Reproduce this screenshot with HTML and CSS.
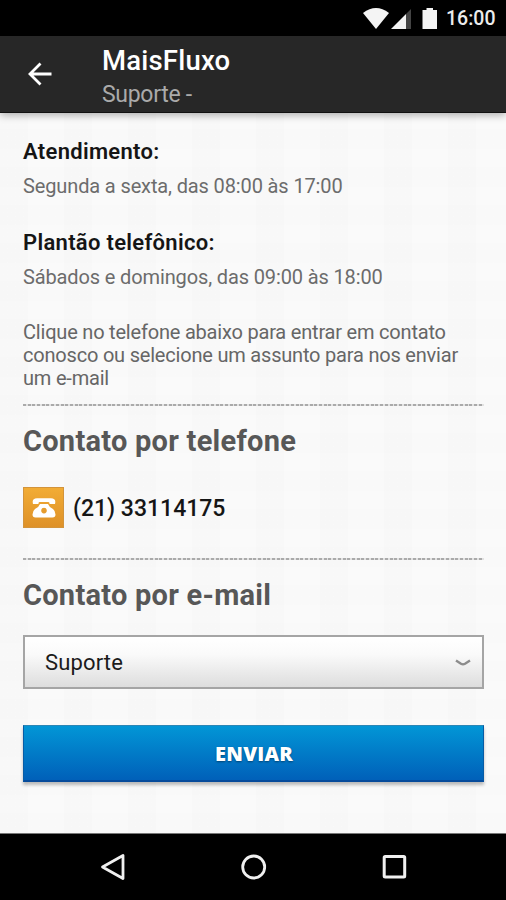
FILE: index.html
```html
<!DOCTYPE html>
<html lang="pt-BR">
<head>
<meta charset="utf-8">
<title>MaisFluxo</title>
<link rel="stylesheet" href="styles.css">
</head>
<body>
<div class="status">
  <svg class="status-icons" width="78" height="24" viewBox="0 0 78 24">
    <path d="M0 6Q13-4 26 6L13 22Z" fill="#f4f4f4"/>
    <path d="M28 22L43 7V22Z" fill="#f4f4f4"/>
    <path d="M43 7L48 2V22H43Z" fill="#444"/>
    <path d="M59.500 3h4V1h6.500v2h4v19H59.500Z" fill="#f4f4f4"/>
  </svg>
  <span class="clock">16:00</span>
</div>
<header class="bar">
  <svg class="back" width="26" height="26" viewBox="0 0 26 26"><path d="M25.500 13H4.500M14.500 2.500L4 13L14.500 23.500" fill="none" stroke="#fff" stroke-width="2.800"/></svg>
  <div>
    <h1 class="title">MaisFluxo</h1>
    <div class="subtitle">Suporte -</div>
  </div>
</header>
<main class="content">
  <section class="hours">
    <h2 class="label">Atendimento:</h2>
    <p class="text">Segunda a sexta, das 08:00 às 17:00</p>
  </section>
  <section class="hours">
    <h2 class="label">Plantão telefônico:</h2>
    <p class="text">Sábados e domingos, das 09:00 às 18:00</p>
  </section>
  <p class="text intro">Clique no telefone abaixo para entrar em contato<br>conosco ou selecione um assunto para nos enviar<br>um e-mail</p>
  <div class="rule"></div>
  <h2 class="heading">Contato por telefone</h2>
  <div class="phone">
    <span class="phone-icon">
      <svg width="24" height="22" viewBox="0 0 24 22">
        <path d="M1 7Q-.5 1.200 5 1.200H19Q24.500 1.200 23 7H17.500Q17.800 5 16 5H8Q6.200 5 6.500 7Z" fill="#fff"/>
        <path fill-rule="evenodd" d="M8 7H16Q17 10 21 12Q23.500 14 23.500 17.500Q23.500 20.500 20.500 20.500H3.500Q.5 20.500 .5 17.500Q.5 14 3 12Q7 10 8 7ZM12 10.800a2.800 2.800 0 1 0 0 5.600a2.800 2.800 0 1 0 0-5.600Z" fill="#fff"/>
      </svg>
    </span>
    <span class="number">(21) 33114175</span>
  </div>
  <div class="rule"></div>
  <h2 class="heading">Contato por e-mail</h2>
  <div class="select"><span>Suporte</span>
    <svg width="16" height="8" viewBox="0 0 16 8"><path d="M1 1.500L6 4.800Q8 6 10 4.800L15 1.500" fill="none" stroke="#8c8c8c" stroke-width="2.400"/></svg>
  </div>
  <button class="send">ENVIAR</button>
</main>
<nav class="nav">
  <svg width="26" height="28" viewBox="0 0 26 28"><path d="M23 2.500V25.500L2.500 14Z" fill="none" stroke="#f0f0f0" stroke-width="2.800" stroke-linejoin="round"/></svg>
  <svg width="26" height="28" viewBox="0 0 26 28"><circle cx="12.700" cy="14" r="11" fill="none" stroke="#f0f0f0" stroke-width="2.800"/></svg>
  <svg width="26" height="28" viewBox="0 0 26 28"><rect x="2.200" y="3.500" width="20.500" height="20.500" rx="1" fill="none" stroke="#f0f0f0" stroke-width="3"/></svg>
</nav>
</body>
</html>
```
FILE: styles.css
```css
* { box-sizing: border-box; margin: 0; padding: 0; }
body {
  width: 506px; height: 900px; overflow: hidden;
  display: flex; flex-direction: column;
  font-family: Roboto, "Liberation Sans", sans-serif;
  white-space: nowrap; background: #f9f9f9;
}
.status {
  height: 36px; flex: none; background: #000; color: #ececec;
  display: flex; align-items: center; justify-content: flex-end; padding-right: 11px;
}
.status-icons { margin: 2px 5px 0 0; }
.clock { font-size: 19.500px; font-weight: 500; line-height: 36px; padding-top: 2px; width: 49px; text-align: right; }
.bar {
  height: 77px; flex: none; background: #272727; color: #fff;
  display: flex; padding: 8px 0 0 26px; gap: 50px;
  border-bottom: 1px solid #111; box-shadow: 0 2px 8px rgba(0,0,0,.32); position: relative;
}
.back { margin-top: 17px; }
.title { font-size: 27.500px; font-weight: 500; line-height: 34px; letter-spacing: .2px; }
.subtitle { font-size: 23px; line-height: 34px; color: #aaa; letter-spacing: -.3px; }
.content {
  flex: 1; padding: 26px 22px 0 23px;
  background:
    repeating-linear-gradient(90deg, rgba(0,0,0,.006) 0 28px, transparent 28px 64px),
    repeating-linear-gradient(0deg, rgba(0,0,0,.004) 0 20px, transparent 20px 38px),
    #fafafa;
}
.hours { height: 91px; }
.label { font-size: 22px; line-height: 26px; font-weight: 600; color: #151515; letter-spacing: .3px; }
.text { font-size: 20px; line-height: 23px; color: #6c6c6c; letter-spacing: -.13px; }
.hours .text { margin-top: 10px; }
.intro { height: 83px; letter-spacing: -.2px; color: #666; }
.rule { height: 2px; background: repeating-linear-gradient(90deg, #aaa 0 3px, #e2e2e2 3px 4.700px); }
.heading { font-size: 29px; line-height: 34px; margin-top: 18px; font-weight: 700; color: #575757; letter-spacing: .26px; }
.phone { display: flex; align-items: center; height: 41px; margin: 29px 0 30px; gap: 9px; }
.phone-icon {
  width: 41px; height: 41px; display: flex; align-items: center; justify-content: center;
  background: linear-gradient(#f2ac35, #de9128); border: 1px solid #d3943b;
}
.number { font-size: 23px; font-weight: 500; color: #151515; padding-top: 2px; }
.select {
  height: 54px; margin-top: 23px; padding: 0 11px 0 20px; border: 2px solid #a5a5a5;
  background: linear-gradient(#fff, #fafafa 35%, #ddd);
  display: flex; align-items: center; justify-content: space-between;
  font-size: 22px; color: #1b1b1b; letter-spacing: .15px;
}
.select svg { margin-top: 2px; }
.send {
  display: block; width: 100%; height: 57px; margin-top: 36px;
  border: 1px solid #075ca6; border-top-color: #2c86b5; border-bottom: 2px solid #064b9b;
  background: linear-gradient(#0296d6, #0060b9); box-shadow: 0 3px 3px rgba(0,0,0,.25);
  color: #fff; font: 800 20px "Open Sans", sans-serif; letter-spacing: .2px; padding-left: 1px; text-shadow: 0 1px 2px rgba(0,0,0,.4);
}
.nav {
  height: 67px; flex: none; background: #000; border-top: 1px solid #777;
  display: flex; align-items: center; justify-content: center; gap: 115px; padding-left: 1px;
}
```
